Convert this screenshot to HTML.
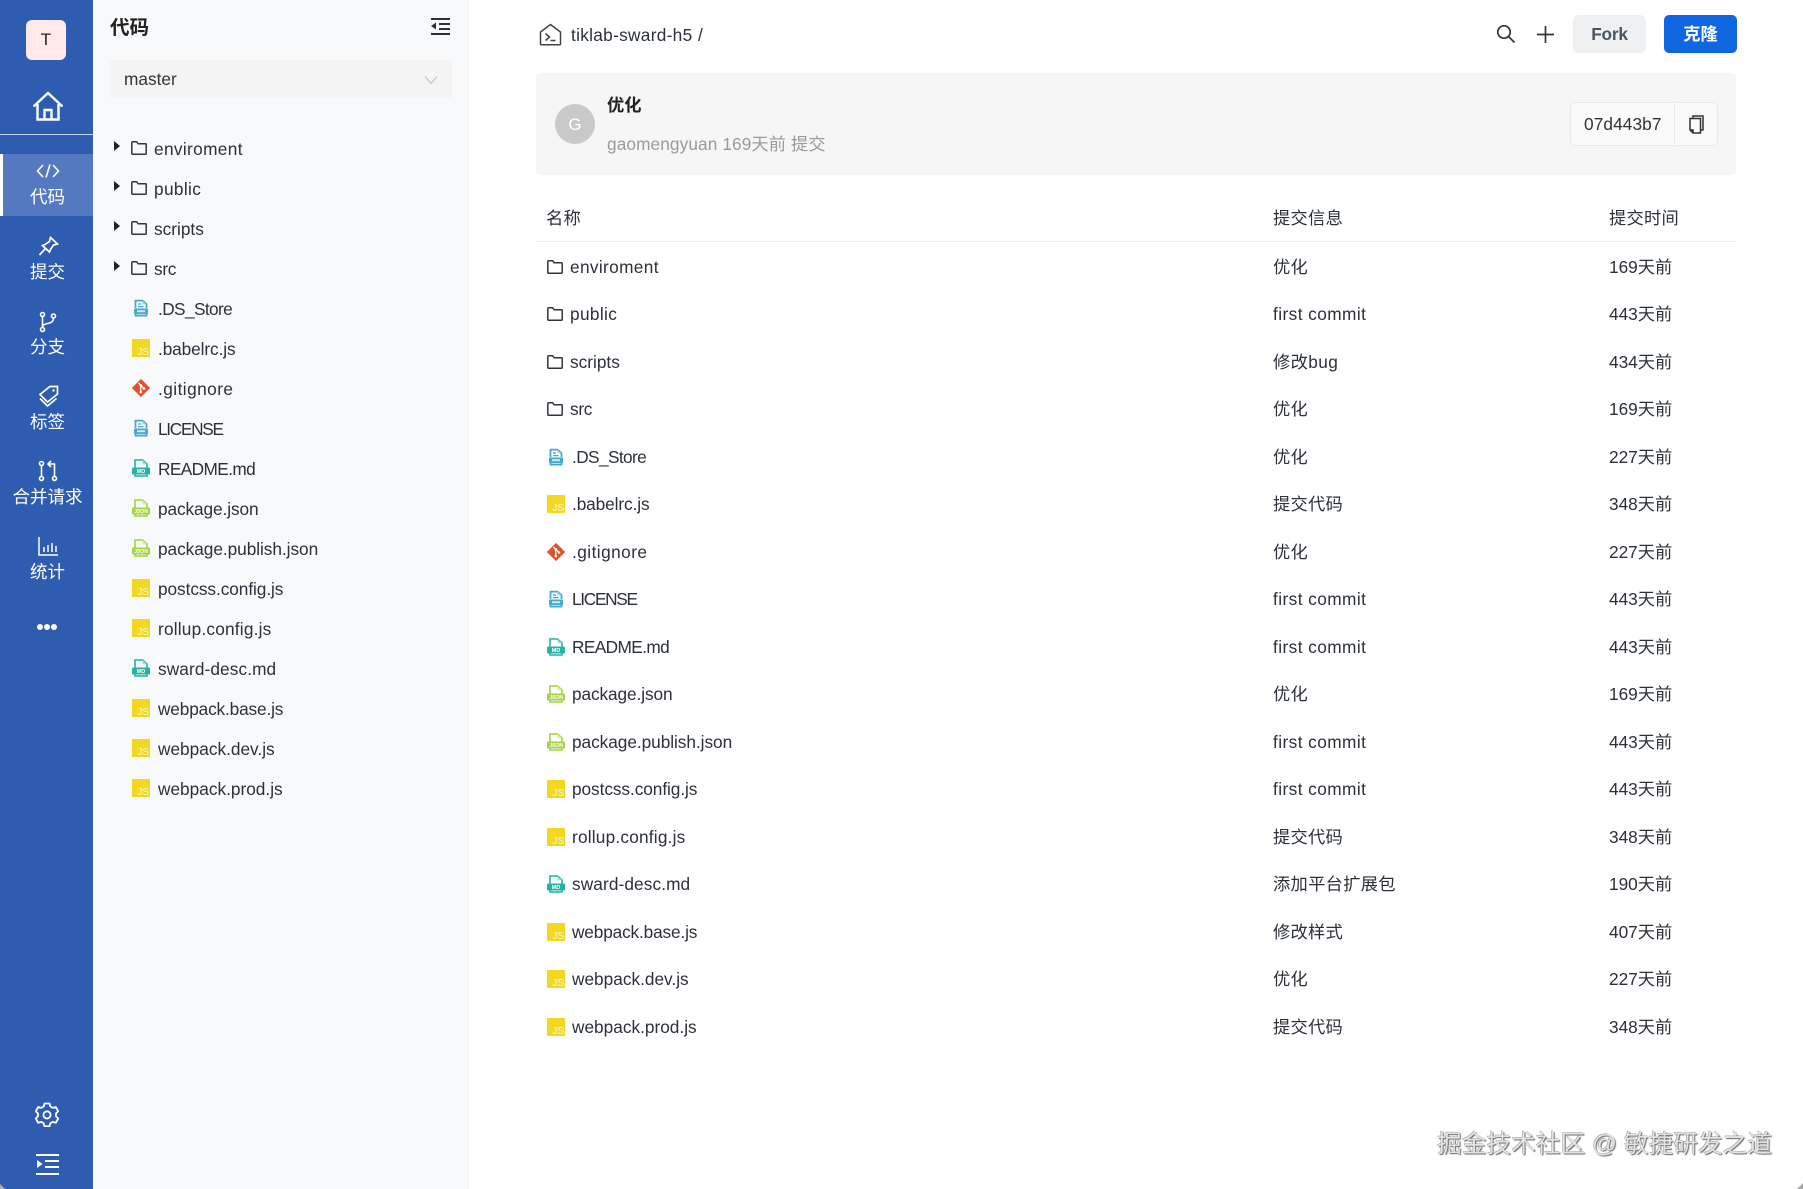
<!DOCTYPE html>
<html lang="zh"><head><meta charset="utf-8"><title>tiklab-sward-h5</title>
<style>
*{box-sizing:border-box;margin:0;padding:0}
html,body{width:1803px;height:1189px;overflow:hidden;background:#fff}
body{position:relative;font-family:"Liberation Sans","Noto Sans CJK SC",sans-serif;font-size:17.25px;color:#2b3039}
.a,.t,svg.i{position:absolute}
.t{line-height:24px;white-space:nowrap}
#side{position:absolute;left:0;top:0;width:93px;height:1189px;background:#2d5cb0}
#panel{position:absolute;left:93px;top:0;width:376px;height:1189px;background:#f8f9fb;border-right:1px solid #f1f2f4}
.nav{position:absolute;left:1px;width:93px;text-align:center;color:#fff;line-height:24px;font-size:17.5px}
.cj{letter-spacing:.25px}
.fc{letter-spacing:.43px}
.l1{letter-spacing:.35px}.l2{letter-spacing:.35px}.l3{letter-spacing:-.3px}.l4{letter-spacing:-.6px}.l5{letter-spacing:-.1px}.l6{letter-spacing:.45px}.l7{letter-spacing:-1.3px}.l8{letter-spacing:-.6px}.l9{letter-spacing:-.1px}.l10{letter-spacing:-.05px}.l11{letter-spacing:-.07px}.l12{letter-spacing:.2px}.l13{letter-spacing:.1px}.l14{letter-spacing:-.15px}
</style></head><body>
<svg width="0" height="0" style="position:absolute">
<defs>
<symbol id="folder" viewBox="0 0 16 14"><path d="M.8 1.6a.8.8 0 0 1 .8-.8h4l1.6 2h7.2a.8.8 0 0 1 .8.8v8.8a.8.8 0 0 1-.8.8H1.6a.8.8 0 0 1-.8-.8z" fill="none" stroke="#2f353e" stroke-width="1.5"/></symbol>
<symbol id="js" viewBox="0 0 18 18"><rect width="18" height="18" fill="#f2d821"/><text x="17" y="16.200" text-anchor="end" font-family="Liberation Sans" font-size="10" fill="#fff" fill-opacity=".8">JS</text></symbol>
<symbol id="doc" viewBox="0 0 18 18"><path d="M3.500 9V1.600h7l4 3.600V9M3.500 14v2.600h11V14" fill="none" stroke="#45a8cd" stroke-width="1.800"/><path d="M10.300 1.600v3.800h4.200z" fill="#9fd6e7"/><path d="M6 5h3M6 7.600h5.500" stroke="#45a8cd" stroke-width="1.300"/><rect x="2" y="9.500" width="14" height="5.600" rx="1" fill="#45a8cd"/><path d="M5 11.200h8v2H5z" fill="#cdeaf3"/></symbol>
<symbol id="md" viewBox="0 0 18 18"><path d="M3 9V1h7.500L15 5v4M3 15v2h12v-2" fill="none" stroke="#27b2a3" stroke-width="1.600"/><path d="M10.300 1v4.300H15z" fill="#9fe0d8"/><rect y="8.500" width="18" height="7" rx="1.300" fill="#27b2a3"/><text x="9" y="14.200" text-anchor="middle" font-family="Liberation Sans" font-size="5.600" font-weight="700" fill="#fff">MD</text></symbol>
<symbol id="json" viewBox="0 0 18 18"><path d="M3 9V1h7.500L15 5v4M3 15v2h12v-2" fill="none" stroke="#a3d341" stroke-width="1.600"/><path d="M10.300 1v4.300H15z" fill="#d8efa6"/><rect y="8.500" width="18" height="7" rx="1.300" fill="#a3d341"/><text x="9" y="14.100" text-anchor="middle" font-family="Liberation Sans" font-size="5" font-weight="700" fill="#fff">JSON</text></symbol>
<symbol id="git" viewBox="0 0 18 18"><path d="M9 .6 17.400 9 9 17.400.6 9z" fill="#e2522a" stroke="#e2522a" stroke-linejoin="round" stroke-width="1"/><path d="M6.500 4 12 9.500M8.800 6.300V13" stroke="#fff" stroke-width="1.300"/><circle cx="8.800" cy="6.300" r="1.300" fill="#fff"/><circle cx="12" cy="9.500" r="1.300" fill="#fff"/><circle cx="8.800" cy="13" r="1.300" fill="#fff"/></symbol>
</defs></svg>

<div id="side">
  <div class="a" style="left:26px;top:20px;width:40px;height:40px;background:#ffe9eb;border-radius:6px;color:#222;text-align:center;line-height:40px;font-size:17px">T</div>
  <svg class="i" style="left:32px;top:91px" width="32" height="31" viewBox="0 0 32 31" fill="none" stroke="#fff" stroke-width="2.400"><path d="M1.500 15.500 16 2l14.500 13.500M5.500 13v15.500h21V13M12.500 28.500V19h7v9.500"/></svg>
  <div class="a" style="left:0;top:134px;width:93px;height:1px;background:#c3d0e8"></div>
  <div class="a" style="left:0;top:154px;width:93px;height:62px;background:#5579c0;border-left:3px solid #fff"></div>

  <svg class="i" style="left:36px;top:163px" width="24" height="16" viewBox="0 0 24 16" fill="none" stroke="#fff" stroke-width="1.600"><path d="M7 2 1.500 8 7 14M17 2l5.500 6L17 14M14 1.500 10 14.500"/></svg>
  <div class="nav" style="top:185px">代码</div>
  <svg class="i" style="left:38px;top:236px" width="21" height="21" viewBox="0 0 21 21" fill="none" stroke="#fff" stroke-width="1.700"><path d="M12.500 1.500l7 6.500-4 1-3 4.500-1 2.500L4.500 9.500 7 8.500l4.500-3zM7 13l-5.500 6"/></svg>
  <div class="nav" style="top:260px">提交</div>
  <svg class="i" style="left:38px;top:311px" width="20" height="22" viewBox="0 0 20 22" fill="none" stroke="#fff" stroke-width="1.600"><circle cx="4.500" cy="3.500" r="2"/><circle cx="4.500" cy="18.500" r="2"/><circle cx="15.500" cy="5" r="2"/><path d="M4.500 5.500v11M15.500 7c0 4-3 5-6 5.500-2.500.4-5 1.500-5 4"/></svg>
  <div class="nav" style="top:335px">分支</div>
  <svg class="i" style="left:38px;top:385px" width="21" height="23" viewBox="0 0 21 23" fill="none" stroke="#fff" stroke-width="1.700"><path d="M12 1.500h7.500V9L9.500 17 2 9.500zM2 13.500l7.500 7.500 9-7.500"/><circle cx="15.500" cy="5.500" r="1.200" fill="#fff" stroke="none"/></svg>
  <div class="nav" style="top:410px">标签</div>
  <svg class="i" style="left:38px;top:460px" width="20" height="22" viewBox="0 0 20 22" fill="none" stroke="#fff" stroke-width="1.600"><circle cx="3.500" cy="3.500" r="2"/><circle cx="3.500" cy="18.500" r="2"/><circle cx="16.500" cy="18.500" r="2"/><path d="M3.500 5.500v11M16.500 16.500V4h-6M13 1l-3 3 3 3"/></svg>
  <div class="nav" style="top:485px">合并请求</div>
  <svg class="i" style="left:38px;top:537px" width="20" height="19" viewBox="0 0 20 19" fill="none" stroke="#fff" stroke-width="1.500"><path d="M1 0v18h19M6 15v-5M10 15V8M14 15V6M18 15V9"/></svg>
  <div class="nav" style="top:560px">统计</div>
  <div class="a" style="left:37px;top:624px;width:6px;height:6px;border-radius:50%;background:#fff"></div>
  <div class="a" style="left:44px;top:624px;width:6px;height:6px;border-radius:50%;background:#fff"></div>
  <div class="a" style="left:51px;top:624px;width:6px;height:6px;border-radius:50%;background:#fff"></div>
  <svg class="i" style="left:35px;top:1102px" width="24" height="25" viewBox="0 0 24 25" fill="none" stroke="#fff" stroke-width="1.800"><path d="M9.500 1.500h5l.8 3 2.500 1.400 3-.9 2.400 4.300-2.200 2.200v2.800l2.200 2.200-2.400 4.300-3-.9-2.500 1.400-.8 3h-5l-.8-3-2.500-1.400-3 .9L.8 16.500 3 14.300v-2.800L.8 9.300 3.200 5l3 .9L8.700 4.500z" stroke-linejoin="round"/><circle cx="12" cy="12.900" r="3.600"/></svg>
  <svg class="i" style="left:36px;top:1154px" width="23" height="21" viewBox="0 0 23 21" fill="#fff"><path d="M0 0h23v2H0zM9 6h14v2H9zM9 12h14v2H9zM0 19h23v2H0z"/><path d="M1 6l5.500 4L1 14z"/></svg>
  <div class="a" style="left:0;top:1184px;width:5px;height:5px;background:#b0aea8;clip-path:polygon(0 0,100% 100%,0 100%)"></div>
</div>

<div id="panel">
  <div class="t" style="left:17px;top:15px;font-size:19.5px;font-weight:700;color:#222;line-height:26px">代码</div>
  <svg class="i" style="left:338px;top:18px" width="19" height="17" viewBox="0 0 19 17" fill="#2b3039"><path d="M0 0h19v2H0zM8 5h11v2H8zM8 10h11v2H8zM0 15h19v2H0z"/><path d="M5 4.500v7L0 8z"/></svg>
  <div class="a" style="left:17px;top:60px;width:342px;height:38px;background:#f4f4f5;border-radius:3px"></div>
  <div class="t" style="left:31px;top:67px;color:#333">master</div>
  <svg class="i" style="left:331px;top:75px" width="14" height="10" viewBox="0 0 14 10" fill="none" stroke="#c4c4c4" stroke-width="1.200"><path d="M1 1.500 7 8.500l6-7"/></svg>
</div>

<!-- tree -->
<div style="position:absolute;left:0;top:0">
<svg class="i" style="left:114px;top:141px" width="6" height="10"><path d="M0 0l6 5-6 5z" fill="#222"/></svg>
<svg class="i" style="left:114px;top:181px" width="6" height="10"><path d="M0 0l6 5-6 5z" fill="#222"/></svg>
<svg class="i" style="left:114px;top:221px" width="6" height="10"><path d="M0 0l6 5-6 5z" fill="#222"/></svg>
<svg class="i" style="left:114px;top:261px" width="6" height="10"><path d="M0 0l6 5-6 5z" fill="#222"/></svg>
<svg class="i" style="left:131px;top:141px" width="16" height="14"><use href="#folder"/></svg><div class="t l1" style="left:154px;top:137px">enviroment</div>
<svg class="i" style="left:131px;top:181px" width="16" height="14"><use href="#folder"/></svg><div class="t l2" style="left:154px;top:177px">public</div>
<svg class="i" style="left:131px;top:221px" width="16" height="14"><use href="#folder"/></svg><div class="t" style="left:154px;top:217px">scripts</div>
<svg class="i" style="left:131px;top:261px" width="16" height="14"><use href="#folder"/></svg><div class="t l3" style="left:154px;top:257px">src</div>
<svg class="i" style="left:132px;top:299px" width="18" height="18"><use href="#doc"/></svg><div class="t l4" style="left:158px;top:297px">.DS_Store</div>
<svg class="i" style="left:132px;top:339px" width="18" height="18"><use href="#js"/></svg><div class="t l5" style="left:158px;top:337px">.babelrc.js</div>
<svg class="i" style="left:132px;top:379px" width="18" height="18"><use href="#git"/></svg><div class="t l6" style="left:158px;top:377px">.gitignore</div>
<svg class="i" style="left:132px;top:419px" width="18" height="18"><use href="#doc"/></svg><div class="t l7" style="left:158px;top:417px">LICENSE</div>
<svg class="i" style="left:132px;top:459px" width="18" height="18"><use href="#md"/></svg><div class="t l8" style="left:158px;top:457px">README.md</div>
<svg class="i" style="left:132px;top:499px" width="18" height="18"><use href="#json"/></svg><div class="t l9" style="left:158px;top:497px">package.json</div>
<svg class="i" style="left:132px;top:539px" width="18" height="18"><use href="#json"/></svg><div class="t l10" style="left:158px;top:537px">package.publish.json</div>
<svg class="i" style="left:132px;top:579px" width="18" height="18"><use href="#js"/></svg><div class="t l11" style="left:158px;top:577px">postcss.config.js</div>
<svg class="i" style="left:132px;top:619px" width="18" height="18"><use href="#js"/></svg><div class="t l12" style="left:158px;top:617px">rollup.config.js</div>
<svg class="i" style="left:132px;top:659px" width="18" height="18"><use href="#md"/></svg><div class="t l13" style="left:158px;top:657px">sward-desc.md</div>
<svg class="i" style="left:132px;top:699px" width="18" height="18"><use href="#js"/></svg><div class="t l14" style="left:158px;top:697px">webpack.base.js</div>
<svg class="i" style="left:132px;top:739px" width="18" height="18"><use href="#js"/></svg><div class="t" style="left:158px;top:737px">webpack.dev.js</div>
<svg class="i" style="left:132px;top:779px" width="18" height="18"><use href="#js"/></svg><div class="t" style="left:158px;top:777px">webpack.prod.js</div>
</div>

<!-- header -->
<svg class="i" style="left:539px;top:23px" width="23" height="23" viewBox="0 0 23 23" fill="none" stroke="#444" stroke-width="1.500"><path d="M1.500 9 11.500 1.500 21.500 9v12a.8.8 0 0 1-.8.8H2.300a.8.8 0 0 1-.8-.8z" stroke-linejoin="round"/><path d="M6.500 10.500l4 3.500-4 3.500M11.500 17.500h5"/></svg>
<div class="t" style="left:571px;top:23px;letter-spacing:.3px">tiklab-sward-h5</div>
<div class="t" style="left:698px;top:23px">/</div>
<svg class="i" style="left:1496px;top:24px" width="20" height="20" viewBox="0 0 20 20" fill="none" stroke="#333" stroke-width="1.700"><circle cx="8" cy="8" r="6.200"/><path d="M12.500 12.500 18.500 18.500"/></svg>
<svg class="i" style="left:1537px;top:26px" width="17" height="17" viewBox="0 0 17 17" stroke="#333" stroke-width="1.700"><path d="M8.500 0v17M0 8.500h17"/></svg>
<div class="a" style="left:1573px;top:15px;width:73px;height:38px;background:#eff0f1;border-radius:6px;text-align:center;line-height:38px;color:#4a5563;font-weight:700;letter-spacing:-.2px">Fork</div>
<div class="a" style="left:1664px;top:15px;width:73px;height:38px;background:#0f66e0;border-radius:5px;text-align:center;line-height:38px;color:#fff;font-weight:700">克隆</div>

<!-- commit box -->
<div class="a" style="left:536px;top:73px;width:1200px;height:102px;background:#f6f6f6;border-radius:4px"></div>
<div class="a" style="left:555px;top:104px;width:40px;height:40px;border-radius:50%;background:#c9c9c9;color:#fff;text-align:center;line-height:42px;font-size:17px">G</div>
<div class="t" style="left:607px;top:93px;font-weight:700;color:#222">优化</div>
<div class="t" style="left:607px;top:132px;color:#9a9a9a;letter-spacing:.1px">gaomengyuan 169天前 提交</div>
<div class="a" style="left:1570px;top:102px;width:148px;height:44px;background:#fafafa;border:1px solid #e9e9e9;border-radius:5px"></div>
<div class="a" style="left:1674px;top:103px;width:1px;height:42px;background:#e9e9e9"></div>
<div class="t" style="left:1584px;top:112px;color:#333;letter-spacing:.1px">07d443b7</div>
<svg class="i" style="left:1689px;top:115px" width="15" height="19" viewBox="0 0 15 19" fill="none" stroke="#333" stroke-width="1.500"><path d="M4 3V1h10v14h-2.500"/><path d="M1 3.500h10.500V18H4l-3-3z"/><path d="M1 15h3v3" fill="#333"/></svg>

<!-- table head -->
<div class="t cj" style="left:546px;top:206px">名称</div>
<div class="t cj" style="left:1273px;top:206px">提交信息</div>
<div class="t cj" style="left:1609px;top:206px">提交时间</div>
<div class="a" style="left:536px;top:241px;width:1200px;height:1px;background:#eceef0"></div>

<!-- table rows -->
<svg class="i" style="left:547px;top:260px" width="16" height="14"><use href="#folder"/></svg><div class="t l1" style="left:570px;top:255px">enviroment</div><div class="t cj" style="left:1273px;top:255px">优化</div><div class="t" style="left:1609px;top:255px">169天前</div>
<svg class="i" style="left:547px;top:307px" width="16" height="14"><use href="#folder"/></svg><div class="t l2" style="left:570px;top:302px">public</div><div class="t fc" style="left:1273px;top:302px">first commit</div><div class="t" style="left:1609px;top:302px">443天前</div>
<svg class="i" style="left:547px;top:355px" width="16" height="14"><use href="#folder"/></svg><div class="t" style="left:570px;top:350px">scripts</div><div class="t" style="left:1273px;top:350px;letter-spacing:.4px">修改bug</div><div class="t" style="left:1609px;top:350px">434天前</div>
<svg class="i" style="left:547px;top:402px" width="16" height="14"><use href="#folder"/></svg><div class="t l3" style="left:570px;top:397px">src</div><div class="t cj" style="left:1273px;top:397px">优化</div><div class="t" style="left:1609px;top:397px">169天前</div>
<svg class="i" style="left:547px;top:448px" width="18" height="18"><use href="#doc"/></svg><div class="t l4" style="left:572px;top:445px">.DS_Store</div><div class="t cj" style="left:1273px;top:445px">优化</div><div class="t" style="left:1609px;top:445px">227天前</div>
<svg class="i" style="left:547px;top:495px" width="18" height="18"><use href="#js"/></svg><div class="t l5" style="left:572px;top:492px">.babelrc.js</div><div class="t cj" style="left:1273px;top:492px">提交代码</div><div class="t" style="left:1609px;top:492px">348天前</div>
<svg class="i" style="left:547px;top:543px" width="18" height="18"><use href="#git"/></svg><div class="t l6" style="left:572px;top:540px">.gitignore</div><div class="t cj" style="left:1273px;top:540px">优化</div><div class="t" style="left:1609px;top:540px">227天前</div>
<svg class="i" style="left:547px;top:590px" width="18" height="18"><use href="#doc"/></svg><div class="t l7" style="left:572px;top:587px">LICENSE</div><div class="t fc" style="left:1273px;top:587px">first commit</div><div class="t" style="left:1609px;top:587px">443天前</div>
<svg class="i" style="left:547px;top:638px" width="18" height="18"><use href="#md"/></svg><div class="t l8" style="left:572px;top:635px">README.md</div><div class="t fc" style="left:1273px;top:635px">first commit</div><div class="t" style="left:1609px;top:635px">443天前</div>
<svg class="i" style="left:547px;top:685px" width="18" height="18"><use href="#json"/></svg><div class="t l9" style="left:572px;top:682px">package.json</div><div class="t cj" style="left:1273px;top:682px">优化</div><div class="t" style="left:1609px;top:682px">169天前</div>
<svg class="i" style="left:547px;top:733px" width="18" height="18"><use href="#json"/></svg><div class="t l10" style="left:572px;top:730px">package.publish.json</div><div class="t fc" style="left:1273px;top:730px">first commit</div><div class="t" style="left:1609px;top:730px">443天前</div>
<svg class="i" style="left:547px;top:780px" width="18" height="18"><use href="#js"/></svg><div class="t l11" style="left:572px;top:777px">postcss.config.js</div><div class="t fc" style="left:1273px;top:777px">first commit</div><div class="t" style="left:1609px;top:777px">443天前</div>
<svg class="i" style="left:547px;top:828px" width="18" height="18"><use href="#js"/></svg><div class="t l12" style="left:572px;top:825px">rollup.config.js</div><div class="t cj" style="left:1273px;top:825px">提交代码</div><div class="t" style="left:1609px;top:825px">348天前</div>
<svg class="i" style="left:547px;top:875px" width="18" height="18"><use href="#md"/></svg><div class="t l13" style="left:572px;top:872px">sward-desc.md</div><div class="t cj" style="left:1273px;top:872px;letter-spacing:.3px">添加平台扩展包</div><div class="t" style="left:1609px;top:872px">190天前</div>
<svg class="i" style="left:547px;top:923px" width="18" height="18"><use href="#js"/></svg><div class="t l14" style="left:572px;top:920px">webpack.base.js</div><div class="t cj" style="left:1273px;top:920px">修改样式</div><div class="t" style="left:1609px;top:920px">407天前</div>
<svg class="i" style="left:547px;top:970px" width="18" height="18"><use href="#js"/></svg><div class="t" style="left:572px;top:967px">webpack.dev.js</div><div class="t cj" style="left:1273px;top:967px">优化</div><div class="t" style="left:1609px;top:967px">227天前</div>
<svg class="i" style="left:547px;top:1018px" width="18" height="18"><use href="#js"/></svg><div class="t" style="left:572px;top:1015px">webpack.prod.js</div><div class="t cj" style="left:1273px;top:1015px">提交代码</div><div class="t" style="left:1609px;top:1015px">348天前</div>

<!-- watermark -->
<div class="a" style="left:1437px;top:1128px;line-height:34px;font-size:24.7px;white-space:nowrap;color:#e4e4e4;text-shadow:1px 1px 1px #666,-.5px -.5px 0 #999">掘金技术社区 @ 敏捷研发之道</div>
<div class="a" style="left:1797px;top:1183px;width:6px;height:6px;background:#a8a8a8;clip-path:polygon(100% 0,100% 100%,0 100%)"></div>
</body></html>
